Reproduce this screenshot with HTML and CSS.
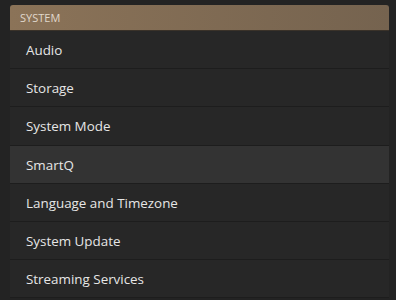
FILE: index.html
```html
<!DOCTYPE html>
<html lang="en">
<head>
  <meta charset="UTF-8" />
  <meta name="viewport" content="width=device-width, initial-scale=1" />
  <title>Settings - System</title>
  <link rel="stylesheet" href="styles.css">
</head>
<body>
  <div class="panel">
    <div class="section-title">SYSTEM</div>
    <ul class="menu">
      <li>Audio</li>
      <li>Storage</li>
      <li>System Mode</li>
      <li class="active">SmartQ</li>
      <li>Language and Timezone</li>
      <li>System Update</li>
      <li>Streaming Services</li>
    </ul>
  </div>
</body>
</html>
```

FILE: styles.css
```css
body {
  background-color: #232323;
  color: #e6e6e6;
  font-family: 'Open Sans', sans-serif;
  margin: 0;
  padding: 5px 7px 0 10px;
}
.panel {
  background: #272727;
}
.section-title {
  height: 25px;
  line-height: 25px;
  padding-left: 10px;
  font-size: 11px;
  color: #e0d8cc;
  background: linear-gradient(to right, #8b7358, #75634f);
  border-radius: 3px 3px 0 0;
  border-bottom: 1px solid #3a3229;
}
.menu {
  list-style: none;
  margin: 0;
  padding: 0;
}
.menu li {
  height: 36.2px;
  padding-top: 1px;
  line-height: 36px;
  padding-left: 16px;
  font-size: 13.4px;
  border-bottom: 1px solid #1d1d1d;
}
.menu li.active {
  background: #333;
}
```
